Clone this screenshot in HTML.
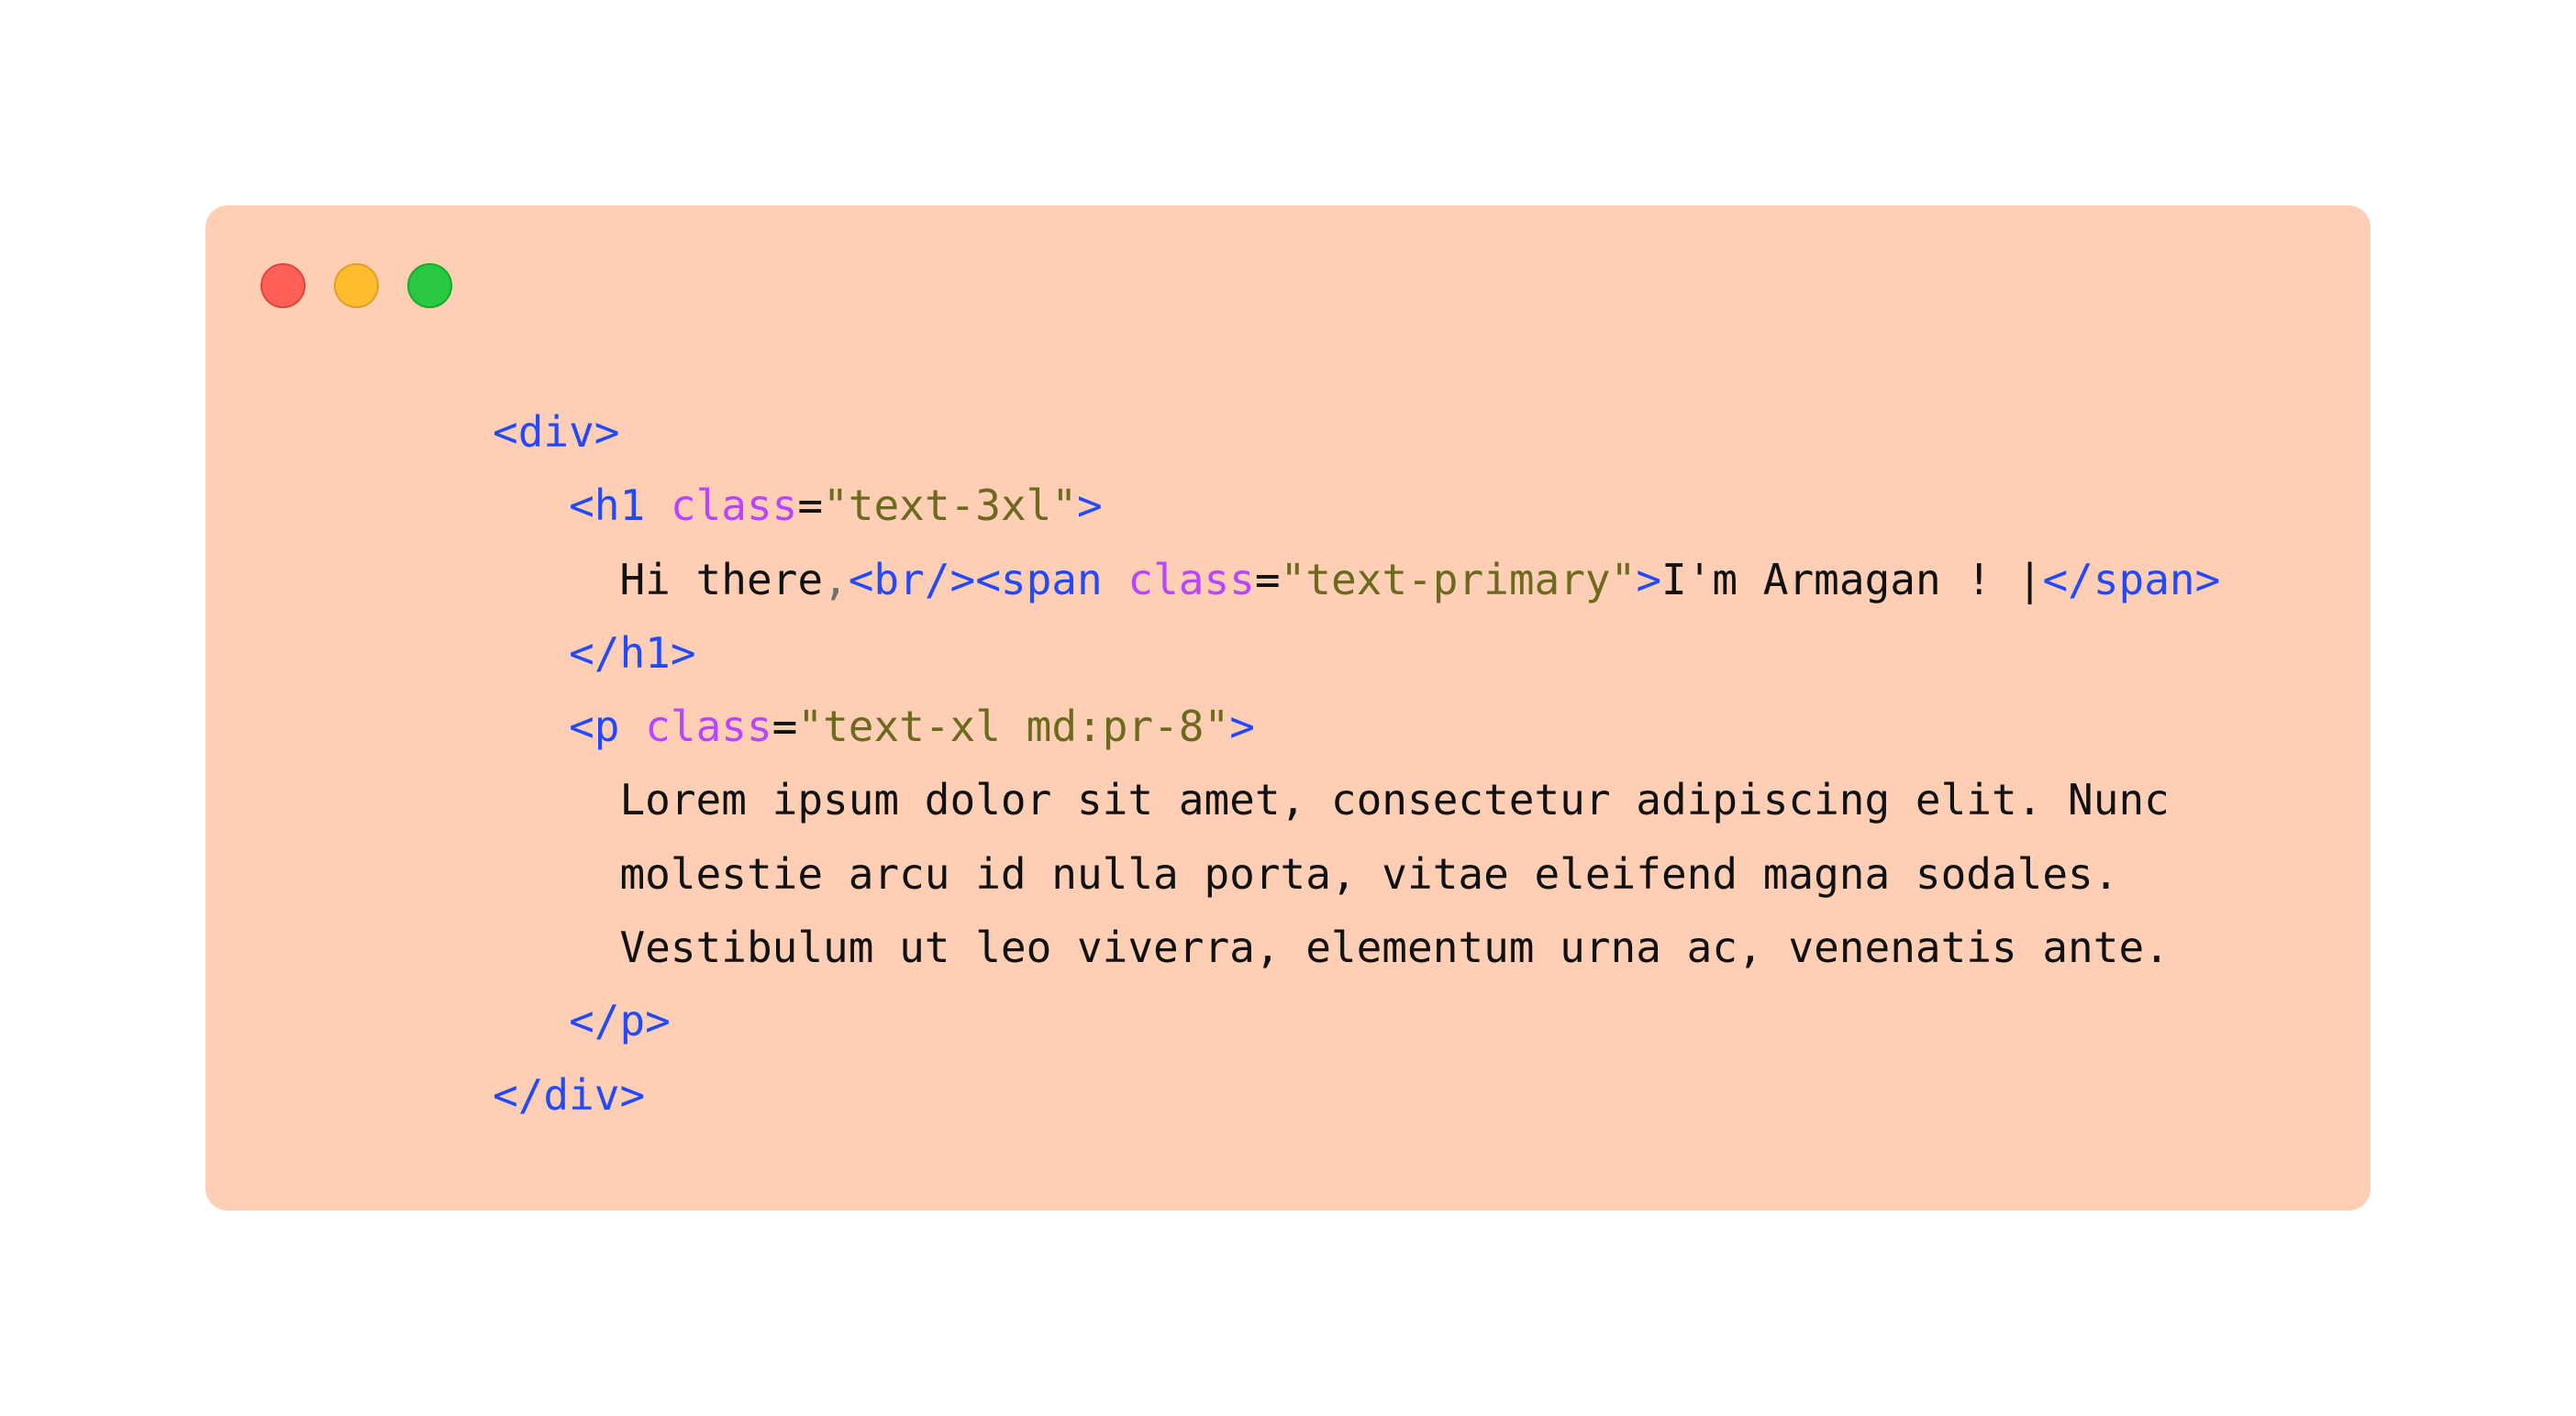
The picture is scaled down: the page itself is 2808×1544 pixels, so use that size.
<!DOCTYPE html>
<html><head><meta charset="utf-8"><style>
html,body{margin:0;padding:0;background:#fff;width:2808px;height:1544px;overflow:hidden}
.card{position:absolute;left:224px;top:224px;width:2360px;height:1096px;background:#fecfb5;border-radius:24px}
.dot{position:absolute;top:287px;width:45px;height:45px;border-radius:50%;border:2px solid}
pre{position:absolute;left:537px;top:431px;margin:0;font-family:"DejaVu Sans Mono","Liberation Mono",monospace;font-size:46px;line-height:80.3px;color:#111}
.b{color:#2349ff}.p{color:#b845ff}.o{color:#6b6a1e}.g{color:#6f6f6f}
</style></head><body>
<div class="card"></div>
<div class="dot" style="left:284px;background:#ff5f57;border-color:#e0443e"></div>
<div class="dot" style="left:364px;background:#febc2e;border-color:#dea123"></div>
<div class="dot" style="left:444px;background:#28c840;border-color:#1aab29"></div>
<pre><span class="b">&lt;div&gt;</span>
   <span class="b">&lt;h1</span> <span class="p">class</span>=<span class="o">"text-3xl"</span><span class="b">&gt;</span>
     Hi there<span class="g">,</span><span class="b">&lt;br/&gt;&lt;span</span> <span class="p">class</span>=<span class="o">"text-primary"</span><span class="b">&gt;</span>I'm Armagan ! |<span class="b">&lt;/span&gt;</span>
   <span class="b">&lt;/h1&gt;</span>
   <span class="b">&lt;p</span> <span class="p">class</span>=<span class="o">"text-xl md:pr-8"</span><span class="b">&gt;</span>
     Lorem ipsum dolor sit amet, consectetur adipiscing elit. Nunc
     molestie arcu id nulla porta, vitae eleifend magna sodales.
     Vestibulum ut leo viverra, elementum urna ac, venenatis ante.
   <span class="b">&lt;/p&gt;</span>
<span class="b">&lt;/div&gt;</span></pre>
</body></html>
